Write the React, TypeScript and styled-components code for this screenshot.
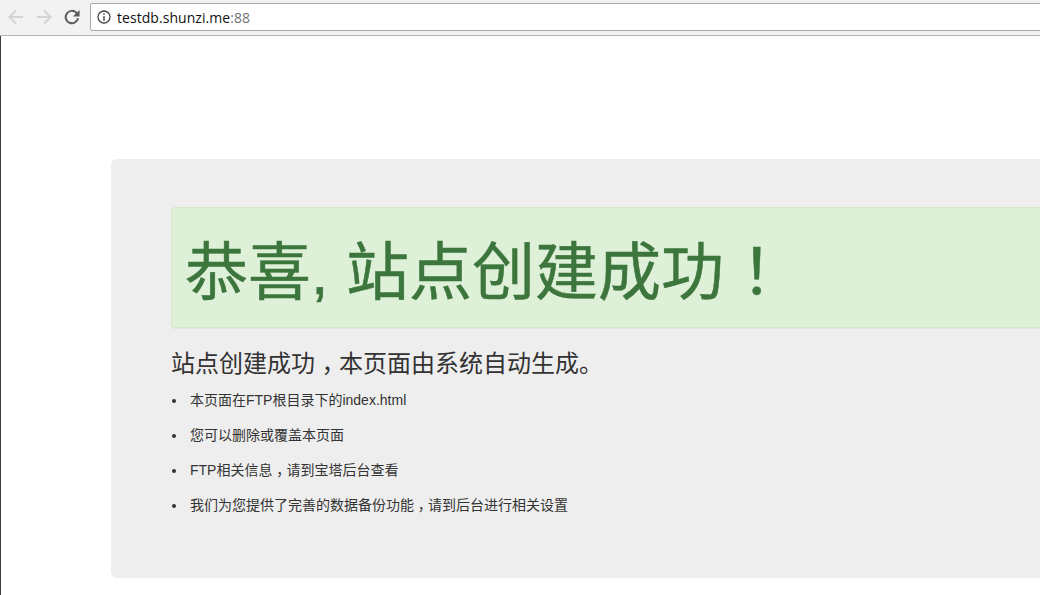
import styled, { createGlobalStyle } from "styled-components";

const GlobalStyle = createGlobalStyle`
  html, body {
    margin: 0;
    padding: 0;
    overflow: hidden;
    background: #fff;
  }
`;

function BackIcon() {
  return (
    <svg width="16" height="16" viewBox="0 0 16 16" fill="none" stroke="#d4d4d4" strokeWidth="2">
      <path d="M15 8H2M8 1.5 1.5 8 8 14.5" />
    </svg>
  );
}

function ForwardIcon() {
  return (
    <svg width="16" height="16" viewBox="0 0 16 16" fill="none" stroke="#d4d4d4" strokeWidth="2">
      <path d="M1 8h13M8 1.5 14.5 8 8 14.5" />
    </svg>
  );
}

function ReloadIcon() {
  return (
    <svg width="16" height="16" viewBox="0 0 16 16">
      <path d="M13.2 3.2A7.2 7.2 0 1 0 15 9.2h-2A5.2 5.2 0 1 1 11.8 4.6L9 7.6h6.6V1z" fill="#5a5a5a" />
    </svg>
  );
}

function InfoIcon() {
  return (
    <svg width="14" height="14" viewBox="0 0 14 14" fill="none">
      <circle cx="7" cy="7" r="6" stroke="#444" strokeWidth="1.3" />
      <path d="M6.3 3.3h1.4v1.4H6.3zM6.3 6h1.4v4.7H6.3z" fill="#444" />
    </svg>
  );
}

export default function App() {
  return (
    <Window>
      <GlobalStyle />
      <Toolbar>
        <NavButton>
          <BackIcon />
        </NavButton>
        <NavButton>
          <ForwardIcon />
        </NavButton>
        <NavButton>
          <ReloadIcon />
        </NavButton>
        <AddressBar>
          <InfoIcon />
          <Url>
            testdb.shunzi.me<Port>:88</Port>
          </Url>
        </AddressBar>
      </Toolbar>
      <Page>
        <Jumbotron>
          <Alert>
            <Heading>
              恭喜, 站点创建成功<Punct>！</Punct>
            </Heading>
          </Alert>
          <Lead>
            站点创建成功<Punct>，</Punct>本页面由系统自动生成。
          </Lead>
          <List>
            <Item>本页面在FTP根目录下的index.html</Item>
            <Item>您可以删除或覆盖本页面</Item>
            <Item>
              FTP相关信息<Punct>，</Punct>请到宝塔后台查看
            </Item>
            <Item>
              我们为您提供了完善的数据备份功能<Punct>，</Punct>请到后台进行相关设置
            </Item>
          </List>
        </Jumbotron>
      </Page>
    </Window>
  );
}

const Window = styled.div`
  width: 1040px;
  height: 595px;
  overflow: hidden;
  font-family: "Liberation Sans", "Noto Sans CJK SC", sans-serif;
  color: #333;
`;

const Toolbar = styled.header`
  display: flex;
  align-items: flex-start;
  box-sizing: border-box;
  height: 36px;
  padding: 3px 0 0 2px;
  background: #f2f2f2;
  border-bottom: 1px solid #b4b4b4;
`;

const NavButton = styled.div`
  display: flex;
  justify-content: center;
  align-items: center;
  flex: none;
  width: 28px;
  height: 28px;
`;

const AddressBar = styled.div`
  display: flex;
  align-items: center;
  flex: none;
  gap: 6px;
  box-sizing: border-box;
  width: 1000px;
  height: 28px;
  margin-left: 4px;
  padding-left: 6px;
  background: #fff;
  border: 1px solid #a9a9a9;
  border-radius: 2px;
`;

const Url = styled.span`
  font-family: "Open Sans", "Noto Sans", sans-serif;
  font-size: 14px;
  letter-spacing: 0.05px;
  color: #111;
`;

const Port = styled.span`
  color: #757575;
`;

const Page = styled.main`
  box-sizing: border-box;
  height: 559px;
  padding: 123px 0 0 110px;
  border-left: 1px solid #3c3c3c;
`;

const Jumbotron = styled.section`
  box-sizing: border-box;
  width: 1100px;
  height: 419px;
  padding: 48px 60px;
  background: #eee;
  border-radius: 6px;
`;

const Alert = styled.div`
  box-sizing: border-box;
  height: 121px;
  margin-bottom: 21px;
  padding: 19px 15px 0 13px;
  background: #dff0d8;
  border: 1px solid #d6e9c6;
  border-radius: 4px;
  box-shadow: 0 1px 1px rgba(0, 0, 0, 0.05);
`;

const Heading = styled.h1`
  margin: 0;
  font-size: 63px;
  font-weight: 400;
  line-height: 90px;
  color: #3c763d;
  -webkit-text-stroke: 0.5px #3c763d;
`;

/* fullwidth punctuation sits mid-cell in the reference font, not at the left */
const Punct = styled.span`
  padding-left: 0.27em;
  letter-spacing: -0.27em;
`;

const Lead = styled.p`
  margin: 0 0 11px;
  font-size: 24px;
  line-height: 30px;
`;

const List = styled.ul`
  margin: 0;
  padding: 0 0 0 19px;
  list-style: none;
  font-size: 14px;
  line-height: 20px;
`;

const Item = styled.li`
  position: relative;
  margin-bottom: 15px;

  &::before {
    content: "";
    position: absolute;
    top: 9px;
    left: -18.5px;
    width: 4px;
    height: 4px;
    border-radius: 50%;
    background: #333;
  }
`;
